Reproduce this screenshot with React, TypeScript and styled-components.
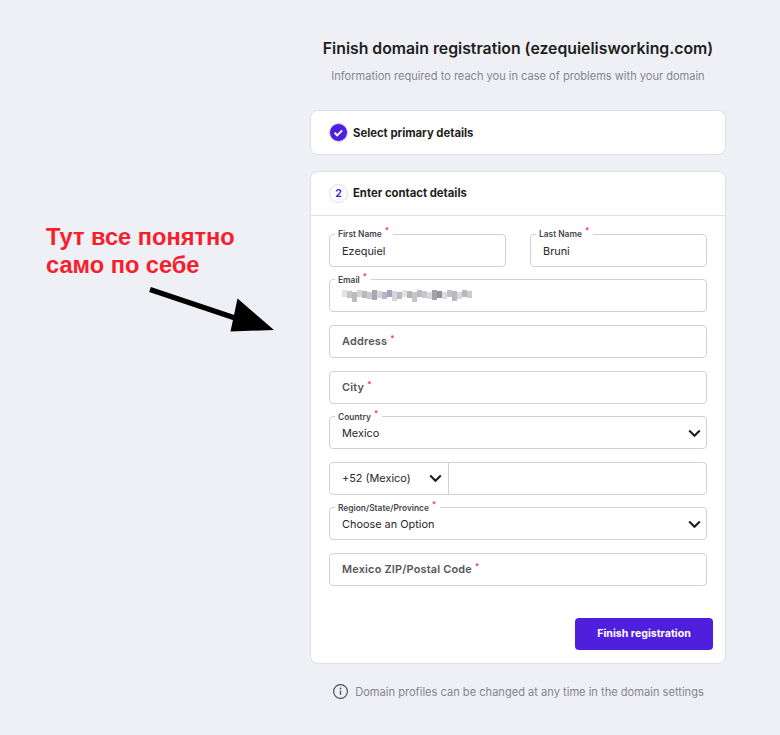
import React from 'react';
import styled, { createGlobalStyle } from 'styled-components';

const GlobalStyle = createGlobalStyle`
  html, body {
    margin: 0;
    padding: 0;
    background: #eff0f6;
  }
  body {
    font-family: Inter, "Noto Sans", sans-serif;
    color: #1d1e20;
  }
`;

const Page = styled.div`
  position: relative;
  width: 780px;
  height: 735px;
  overflow: hidden;
  padding: 39px 54px 0 310px;
  box-sizing: border-box;
`;

const Title = styled.h1`
  margin: 0;
  font-size: 15.8px;
  line-height: 20px;
  font-weight: 600;
  text-align: center;
  color: #1d1e20;
  white-space: nowrap;
`;

const Subtitle = styled.p`
  margin: 9px 0 0;
  font-size: 11.05px;
  line-height: 17px;
  text-align: center;
  color: #83868f;
  white-space: nowrap;
`;

const Card = styled.section`
  background: #fff;
  border: 1px solid #dfe0e4;
  border-radius: 8px;
  box-sizing: border-box;
`;

const StepCard = styled(Card)`
  margin-top: 25px;
  height: 45px;
  display: flex;
  align-items: center;
  padding-left: 18px;
  gap: 5px;
`;

const ContactCard = styled(Card)`
  margin-top: 16px;
  height: 493px;
`;

const CardHeader = styled.div`
  height: 42.5px;
  display: flex;
  align-items: center;
  padding-left: 18px;
  gap: 5px;
  border-bottom: 1px solid #dfe0e4;
`;

const StepTitle = styled.span`
  font-size: 11.3px;
  font-weight: 700;
  color: #1d1e20;
`;

const StepNumber = styled.span`
  width: 17px;
  height: 17px;
  border-radius: 50%;
  border: 1px solid #e3dcf8;
  display: flex;
  align-items: center;
  justify-content: center;
  font-size: 10.5px;
  font-weight: 700;
  color: #4f1fde;
`;

const Form = styled.div`
  display: flex;
  flex-direction: column;
  gap: 12.6px;
  padding: 18.4px 18px 0;
`;

const Row = styled.div`
  display: grid;
  grid-template-columns: 177px 177px;
  column-gap: 24px;
`;

const Box = styled.div`
  position: relative;
  height: 33px;
  border: 1px solid #cfd1d6;
  border-radius: 4px;
  box-sizing: border-box;
  display: flex;
  align-items: center;
  background: #fff;
`;

const FieldBox = styled(Box)`
  padding: 1px 4px 0 12px;
  justify-content: space-between;
`;

const FloatLabel = styled.span`
  position: absolute;
  left: 5px;
  top: -5.5px;
  padding: 0 4px 0 3px;
  background: linear-gradient(#fff0 0 40%, #fff 40%);
  font-size: 8.4px;
  line-height: 11px;
  font-weight: 600;
  color: #44464d;
  white-space: nowrap;
`;

const Star = styled.sup`
  color: #f5296f;
  font-size: 8px;
  line-height: 0;
  margin-left: 3px;
  vertical-align: 4px;
`;

const Value = styled.span`
  font-size: 10.9px;
  color: #25262c;
  white-space: nowrap;
`;

const Placeholder = styled.span`
  font-size: 10.9px;
  font-weight: 600;
  letter-spacing: 0.2px;
  color: #55565c;
  white-space: nowrap;
`;

const EmptyBox = styled(Box)`
  padding: 0 12px 1px;
`;

const PhoneBox = styled(Box)`
  align-items: stretch;
`;

const PhoneCode = styled.div`
  width: 119px;
  border-right: 1px solid #cfd1d6;
  display: flex;
  align-items: center;
  justify-content: space-between;
  padding: 0 5px 0 12px;
  box-sizing: border-box;
`;

const Footer = styled.div`
  display: flex;
  justify-content: flex-end;
  padding: 31.5px 12px 0 0;
`;

const PrimaryButton = styled.button`
  width: 138px;
  height: 32px;
  background: #4f1fde;
  color: #fff;
  border: 0;
  border-radius: 4px;
  font-family: inherit;
  font-size: 10.6px;
  font-weight: 700;
`;

const Note = styled.div`
  margin-top: 19px;
  display: flex;
  align-items: center;
  justify-content: center;
  gap: 6px;
  font-size: 11.1px;
  color: #83868f;
  white-space: nowrap;
`;

const Annotation = styled.div`
  position: absolute;
  left: 46px;
  top: 223px;
  font-family: "Liberation Sans", Arial, sans-serif;
  font-size: 23.6px;
  line-height: 28px;
  font-weight: 700;
  color: #f6202c;
  white-space: nowrap;
`;

const ArrowSvg = styled.svg`
  position: absolute;
  left: 145px;
  top: 280px;
`;

const Mosaic = styled.svg`
  display: block;
  margin-top: -2px;
`;

const Chevron = () => (
  <svg width="15" height="13" viewBox="0 0 15 13" fill="none">
    <path d="M2.2 3.6l5.3 5.2 5.3-5.2" stroke="#1d1e20" strokeWidth="2.1" />
  </svg>
);

const CheckBadge = () => (
  <svg width="19" height="19" viewBox="0 0 19 19">
    <circle cx="9.5" cy="9.5" r="9" fill="#4f1fde" stroke="#d9d0f6" strokeWidth="1" />
    <path d="M5.6 9.8l2.6 2.5 5-5" fill="none" stroke="#fff" strokeWidth="1.9" />
  </svg>
);

const InfoIcon = () => (
  <svg width="17" height="17" viewBox="0 0 17 17" fill="none">
    <circle cx="8.5" cy="8.5" r="6.9" stroke="#4c4d54" strokeWidth="1.2" />
    <circle cx="8.5" cy="5.5" r="0.9" fill="#4c4d54" />
    <path d="M8.5 7.6v4.2" stroke="#4c4d54" strokeWidth="1.3" />
  </svg>
);

// pixelated email, the reference blurs it out
const mosaicCells = [
  '#e2e2e4', '#c4c4c8', '#bcbcc0', '#d4d4d6', '#b8b8bc', '#c8c8cc', '#a8a8b0', '#d4d4d8',
  '#b4b6ca', '#a4a7bc', '#d6d6da', '#bababe', '#e2e2e4', '#b4b4ba', '#c6c6ca', '#bcbcc2',
  '#c8c8ce', '#dadadc', '#a2a2aa', '#94949e', '#dededf', '#c2c2c6', '#b8b8be', '#d8d8dc',
  '#b6b6bc', '#cacad0',
];

const BlurredEmail = () => (
  <Mosaic width="132" height="14" viewBox="0 0 132 14">
    {mosaicCells.map((fill, i) => (
      <rect key={i} x={i * 5} y={2 + (i % 3)} width="5" height={i % 4 === 2 ? 10 : 7} fill={fill} />
    ))}
  </Mosaic>
);

const Required: React.FC<{ children: React.ReactNode }> = ({ children }) => (
  <FloatLabel>
    {children}
    <Star>*</Star>
  </FloatLabel>
);

const LabeledField: React.FC<{ label: string; value: string }> = ({ label, value }) => (
  <FieldBox>
    <Required>{label}</Required>
    <Value>{value}</Value>
  </FieldBox>
);

const SelectField: React.FC<{ label: string; value: string }> = ({ label, value }) => (
  <FieldBox>
    <Required>{label}</Required>
    <Value>{value}</Value>
    <Chevron />
  </FieldBox>
);

const EmptyField: React.FC<{ label: string }> = ({ label }) => (
  <EmptyBox>
    <Placeholder>
      {label}
      <Star>*</Star>
    </Placeholder>
  </EmptyBox>
);

const App: React.FC = () => (
  <Page>
    <GlobalStyle />
    <Title>Finish domain registration (ezequielisworking.com)</Title>
    <Subtitle>Information required to reach you in case of problems with your domain</Subtitle>

    <StepCard>
      <CheckBadge />
      <StepTitle>Select primary details</StepTitle>
    </StepCard>

    <ContactCard>
      <CardHeader>
        <StepNumber>2</StepNumber>
        <StepTitle>Enter contact details</StepTitle>
      </CardHeader>
      <Form>
        <Row>
          <LabeledField label="First Name" value="Ezequiel" />
          <LabeledField label="Last Name" value="Bruni" />
        </Row>
        <FieldBox>
          <Required>Email</Required>
          <BlurredEmail />
        </FieldBox>
        <EmptyField label="Address" />
        <EmptyField label="City" />
        <SelectField label="Country" value="Mexico" />
        <PhoneBox>
          <PhoneCode>
            <Value>+52 (Mexico)</Value>
            <Chevron />
          </PhoneCode>
        </PhoneBox>
        <SelectField label="Region/State/Province" value="Choose an Option" />
        <EmptyField label="Mexico ZIP/Postal Code" />
      </Form>
      <Footer>
        <PrimaryButton>Finish registration</PrimaryButton>
      </Footer>
    </ContactCard>

    <Note>
      <InfoIcon />
      Domain profiles can be changed at any time in the domain settings
    </Note>

    <Annotation>
      Тут все понятно
      <br />
      само по себе
    </Annotation>
    <ArrowSvg width="135" height="60" viewBox="0 0 135 60">
      <path d="M5 9.5L96 40" stroke="#000" strokeWidth="5.5" />
      <path d="M92.5 18.5L129 50L85.5 51.5Z" fill="#000" />
    </ArrowSvg>
  </Page>
);

export default App;
